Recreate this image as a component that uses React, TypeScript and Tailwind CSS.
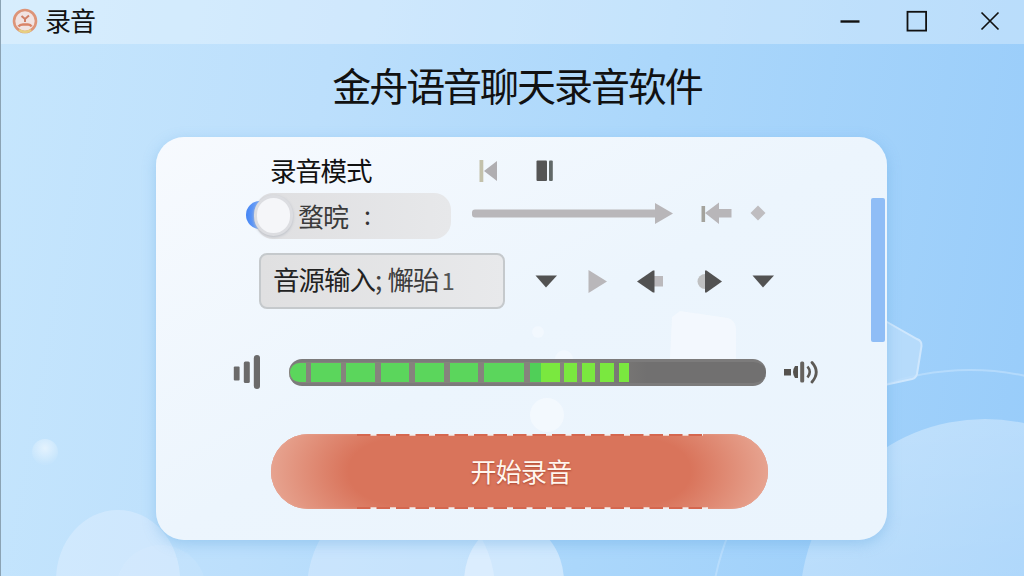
import { ReactNode } from "react";

interface IconProps {
  w: number;
  h: number;
  className?: string;
  children: ReactNode;
}

function Icon({ w, h, className, children }: IconProps) {
  return (
    <svg width={w} height={h} viewBox={`0 0 ${w} ${h}`} className={className ?? ""}>
      {children}
    </svg>
  );
}

// Level meter blocks: gap before the block, width, colour
const segments = [
  { gap: 1, width: 16, color: "bg-[#5bd65c] rounded-l-[10px]" },
  { gap: 5, width: 30, color: "bg-[#5bd65c]" },
  { gap: 5, width: 29, color: "bg-[#5bd65c]" },
  { gap: 6, width: 28, color: "bg-[#5bd65c]" },
  { gap: 6, width: 29, color: "bg-[#5bd65c]" },
  { gap: 6, width: 28, color: "bg-[#5bd65c]" },
  { gap: 6, width: 40, color: "bg-[#5bd65c]" },
  { gap: 6, width: 11, color: "bg-[#50cf58]" },
  { gap: 0, width: 19, color: "bg-[#7ae83f]" },
  { gap: 4, width: 13, color: "bg-[#7ae83f]" },
  { gap: 5, width: 13, color: "bg-[#7ae83f]" },
  { gap: 5, width: 14, color: "bg-[#7ae83f]" },
  { gap: 5, width: 10, color: "bg-[#7ae83f]" },
];

function Backdrop() {
  return (
    <svg className="absolute inset-0" width="1024" height="576" viewBox="0 0 1024 576">
      <defs>
        <linearGradient id="bubble" x1="0" y1="0" x2="0.3" y2="1">
          <stop offset="0" stopColor="#fff" stopOpacity="0.36" />
          <stop offset="1" stopColor="#fff" stopOpacity="0.12" />
        </linearGradient>
        <radialGradient id="ball" cx="0.5" cy="0.35" r="0.6">
          <stop offset="0" stopColor="#fff" stopOpacity="0.55" />
          <stop offset="1" stopColor="#fff" stopOpacity="0.05" />
        </radialGradient>
      </defs>
      <ellipse cx="117" cy="580" rx="62" ry="70" fill="#e4f1ff" opacity="0.42" />
      <circle cx="160" cy="590" r="45" fill="#fff" opacity="0.08" />
      <circle cx="44" cy="452" r="13" fill="url(#ball)" />
      <ellipse cx="400" cy="590" rx="94" ry="100" fill="#e4f1ff" opacity="0.4" />
      <ellipse cx="513" cy="582" rx="50" ry="60" fill="#f2f8ff" opacity="0.5" />
      <circle cx="969" cy="630" r="260" fill="none" stroke="#c4e2fd" strokeWidth="2" opacity="0.6" />
      <circle cx="984" cy="604" r="185" fill="url(#bubble)" />
      <path d="M879 318 L916 339 Q921 341 920.500 346 L916 374 Q915 378 911 379 L879 386 Z" fill="#bcddfb" fillOpacity="0.8" stroke="#cfe7fd" strokeWidth="2" />
    </svg>
  );
}

function TitleBar() {
  return (
    <header className="relative flex h-[44px] items-center bg-white/30 pl-[11px]">
      <Icon w={26} h={26} className="-mt-0.5">
        <circle cx="13" cy="13" r="11" fill="#f1e3e2" stroke="#dd9478" strokeWidth="2.600" />
        <path d="M7 22 A11 11 0 0 0 19 22" fill="none" stroke="#e6cf80" strokeWidth="2.600" />
        <path d="M9.500 8 L13 11 L17 7.500 M13 10.500 V14" fill="none" stroke="#d07f66" strokeWidth="2" />
        <path d="M6.500 18.500 Q8 16.500 11 16.500 H16 Q18.500 16.500 19.500 18.500" fill="none" stroke="#d98468" strokeWidth="2.600" />
      </Icon>
      <span className="-mt-[5px] ml-[7px] text-[26px] leading-none tracking-[-1px]">录音</span>
      <div className="ml-auto flex items-center pr-[24px] pb-[3px]">
        <Icon w={20} h={22}>
          <path d="M0.500 11.500 H19.500" stroke="#111" strokeWidth="2.400" />
        </Icon>
        <Icon w={22} h={22} className="ml-[46px]">
          <rect x="1.500" y="1.800" width="18.600" height="18.800" fill="none" stroke="#111" strokeWidth="1.800" />
        </Icon>
        <Icon w={20} h={22} className="ml-[52px]">
          <path d="M1.500 2.500 L18.500 19.500 M18.500 2.500 L1.500 19.500" stroke="#111" strokeWidth="1.700" />
        </Icon>
      </div>
    </header>
  );
}

function ModeRow() {
  return (
    <div className="flex h-[56px] items-center pt-[10px] pl-[114px]">
      <span className="w-[208px] text-[26.500px] leading-none tracking-[-1.200px]">录音模式</span>
      <Icon w={20} h={24}>
        <rect x="1.500" y="2" width="3.800" height="22" fill="#c3c1ab" />
        <path d="M6 13 L19 3 V23 Z" fill="#b0aeb1" />
      </Icon>
      <Icon w={18} h={24} className="ml-[38px]">
        <rect x="0.500" y="2.500" width="10.500" height="20.500" rx="1" fill="#555" />
        <rect x="13" y="2.500" width="3.800" height="20.500" rx="1" fill="#626968" />
      </Icon>
    </div>
  );
}

function SwitchRow() {
  return (
    <div className="flex h-[46px] items-center pl-[100px]">
      <div className="relative flex h-[46px] w-[195px] items-center rounded-[17px] bg-gradient-to-r from-[#dfdfe1] to-[#e7e8ea] pl-[42px]">
        <span className="absolute top-[8px] left-[-10px] h-[28px] w-[22px] rounded-l-full bg-gradient-to-r from-[#4585f4] to-[#8db8fb]" />
        <span className="absolute top-[2px] left-[-2px] h-[41px] w-[39px] rounded-full border-[3px] border-[#dcdde1] bg-[#f5f6f9] shadow-[0_1px_3px_#b9bdc5]" />
        <span className="-mt-px text-[26px] leading-none tracking-[-1px] text-[#3b3b3b]">蝥晥</span>
        <span className="-mt-1 ml-[16px] text-[25px] leading-none text-[#333]">:</span>
      </div>
      <Icon w={202} h={24} className="-mt-[6px] ml-[20px]">
        <rect x="1" y="8.500" width="186" height="8" rx="3" fill="#b9b7ba" />
        <path d="M184 2 L202 12.500 L184 23 Z" fill="#b8b6b9" />
      </Icon>
      <Icon w={32} h={24} className="-mt-[6px] ml-[28px]">
        <rect x="0.500" y="5" width="3.600" height="16" fill="#a4a39d" />
        <path d="M4 12 L18 1.500 V8 H30.500 V16.500 H18 V23 Z" fill="#b8b6b9" />
      </Icon>
      <Icon w={16} h={16} className="-mt-[6px] ml-[17px]">
        <path d="M8 0.500 L15.500 8 L8 15.500 L0.500 8 Z" fill="#bfbdc0" />
      </Icon>
    </div>
  );
}

function SourceRow() {
  return (
    <div className="mt-[14px] flex h-[56px] items-center pl-[103px]">
      <button className="flex h-[56px] w-[246px] items-center rounded-[8px] border-2 border-[#c5c9cc] bg-gradient-to-r from-[#e0e0e1] to-[#e8e9eb] pb-[3px] pl-[12px] text-[26.500px] leading-none tracking-[-1px] text-[#222]">
        <span>音源输入</span>
        <span className="text-[#444]">;</span>
        <span className="ml-[6px] text-[#3b3b3b]">懈骀</span>
        <span className="ml-[3px] text-[24px] text-[#555]">1</span>
      </button>
      <Icon w={22} h={24} className="ml-[30px]">
        <path d="M0.500 6.500 H22 L11 18.500 Z" fill="#525252" />
      </Icon>
      <Icon w={20} h={24} className="ml-[31px]">
        <path d="M0.500 1 L19 12.500 L0.500 24 Z" fill="#b9b7ba" />
      </Icon>
      <Icon w={28} h={24} className="ml-[28px]">
        <rect x="15" y="7" width="12" height="10.500" fill="#bbb9bc" />
        <path d="M1 12.500 L17 1.500 H18.500 V23.500 H17 Z" fill="#525252" />
      </Icon>
      <Icon w={26} h={24} className="ml-[33px]">
        <circle cx="8" cy="12.500" r="7.500" fill="#bfc0c1" />
        <path d="M8 1.500 H9.500 L25 12.500 L9.500 23.500 H8 Z" fill="#525252" />
      </Icon>
      <Icon w={22} h={24} className="ml-[29px]">
        <path d="M0.500 6.500 H22 L11 18.500 Z" fill="#525252" />
      </Icon>
    </div>
  );
}

function LevelRow() {
  return (
    <div className="mt-[45px] flex h-[36px] items-center pl-[77px]">
      <Icon w={28} h={36}>
        <rect x="0.800" y="12.500" width="5.800" height="14" rx="1" fill="#6b6a6a" />
        <rect x="10.800" y="7.500" width="6" height="21.500" rx="1.500" fill="#6b6a6a" />
        <rect x="20.800" y="1" width="6.200" height="34" rx="3" fill="#6b6a6a" />
      </Icon>
      <div className="ml-[28px] flex h-[27px] w-[477px] items-center rounded-[13px] border-y-[3px] border-[#7c7b7b] bg-gradient-to-r from-[#86837d] from-60% to-[#717070] to-75%">
        {segments.map((s, i) => (
          <div key={i} className={`h-[19px] shrink-0 ${s.color}`} style={{ marginLeft: s.gap, width: s.width }} />
        ))}
      </div>
      <Icon w={36} h={26} className="ml-[18px]">
        <rect x="0" y="10" width="7" height="6.500" fill="#55524e" />
        <path d="M14 7 V19 H11 Q9 16 9 13 Q9 10 11 7 Z" fill="#55524e" />
        <rect x="16.200" y="2.500" width="4" height="21" rx="1.500" fill="#66635f" />
        <path d="M23.500 7.500 Q28 13 23.500 18.500" fill="none" stroke="#5d5a56" strokeWidth="2.600" />
        <path d="M28 3.500 Q36.500 13 28 23" fill="none" stroke="#5d5a56" strokeWidth="2.800" strokeLinecap="round" />
      </Icon>
    </div>
  );
}

function RecordButton() {
  return (
    <button className="relative mt-[44px] ml-[115px] flex h-[75px] w-[497px] items-center justify-center overflow-hidden rounded-full bg-[#d9745b] text-[26px] leading-none tracking-[-0.800px] text-[#fff6ee] shadow-[inset_0_0_2px_#e9a08c]">
      <span className="absolute inset-y-0 left-0 w-[125px] bg-[radial-gradient(ellipse_125px_85px_at_100%_50%,transparent_38%,rgba(232,168,149,0.9)_100%)]" />
      <span className="absolute inset-y-0 right-0 w-[125px] bg-[radial-gradient(ellipse_125px_85px_at_0%_50%,transparent_38%,rgba(232,168,149,0.9)_100%)]" />
      <svg className="absolute inset-0" width="497" height="75" viewBox="0 0 497 75">
        <path d="M86 1 H432 M86 74 H435" stroke="#d5674f" strokeWidth="2" />
        <path d="M99.500 0.700 H432 M99.500 74.200 H437" stroke="#f3efee" strokeWidth="2" strokeDasharray="6 13.500" />
      </svg>
      <span className="relative ml-[3px] -mt-0.5 [text-shadow:0_1px_2px_#a9452f]">开始录音</span>
    </button>
  );
}

export default function App() {
  return (
    <div className="relative flex h-[576px] w-[1024px] flex-col overflow-hidden border-l border-[#8ba3b4] bg-[linear-gradient(100deg,#c6e6fd_0%,#bcdffc_30%,#abd7fb_60%,#98ccfa_100%)] font-['Noto_Sans_CJK_SC',sans-serif] text-[#111]">
      <Backdrop />
      <TitleBar />
      <h1 className="relative mt-[19px] -ml-px h-[42px] text-center text-[39px] leading-[42px] font-normal tracking-[-2.050px] pl-[10px]">
        金舟语音聊天录音软件
      </h1>
      <main className="relative mt-[32px] ml-[155px] h-[403px] w-[731px] rounded-[28px] bg-gradient-to-br from-[#f7fafe] via-[#ecf5fd] to-[#eaf4fd] shadow-[0_4px_14px_rgba(90,160,220,0.35)]">
        <svg className="absolute inset-0" width="731" height="403" viewBox="0 0 731 403">
          <path d="M524 174 L572 181 Q580 184 580 192 V222 L514 222 L516 180 Z" fill="#f6fafe" opacity="0.7" />
          <circle cx="391" cy="278" r="17" fill="#f8fbff" opacity="0.6" />
          <circle cx="382" cy="195" r="6" fill="#f8fbff" opacity="0.5" />
          <circle cx="408" cy="222" r="9" fill="#f8fbff" opacity="0.5" />
        </svg>
        <div className="relative flex flex-col">
          <ModeRow />
          <SwitchRow />
          <SourceRow />
          <LevelRow />
          <RecordButton />
        </div>
        <span className="absolute top-[61px] right-[2px] h-[144px] w-[14px] rounded-[2px] bg-[#8fbdf6]" />
      </main>
    </div>
  );
}
